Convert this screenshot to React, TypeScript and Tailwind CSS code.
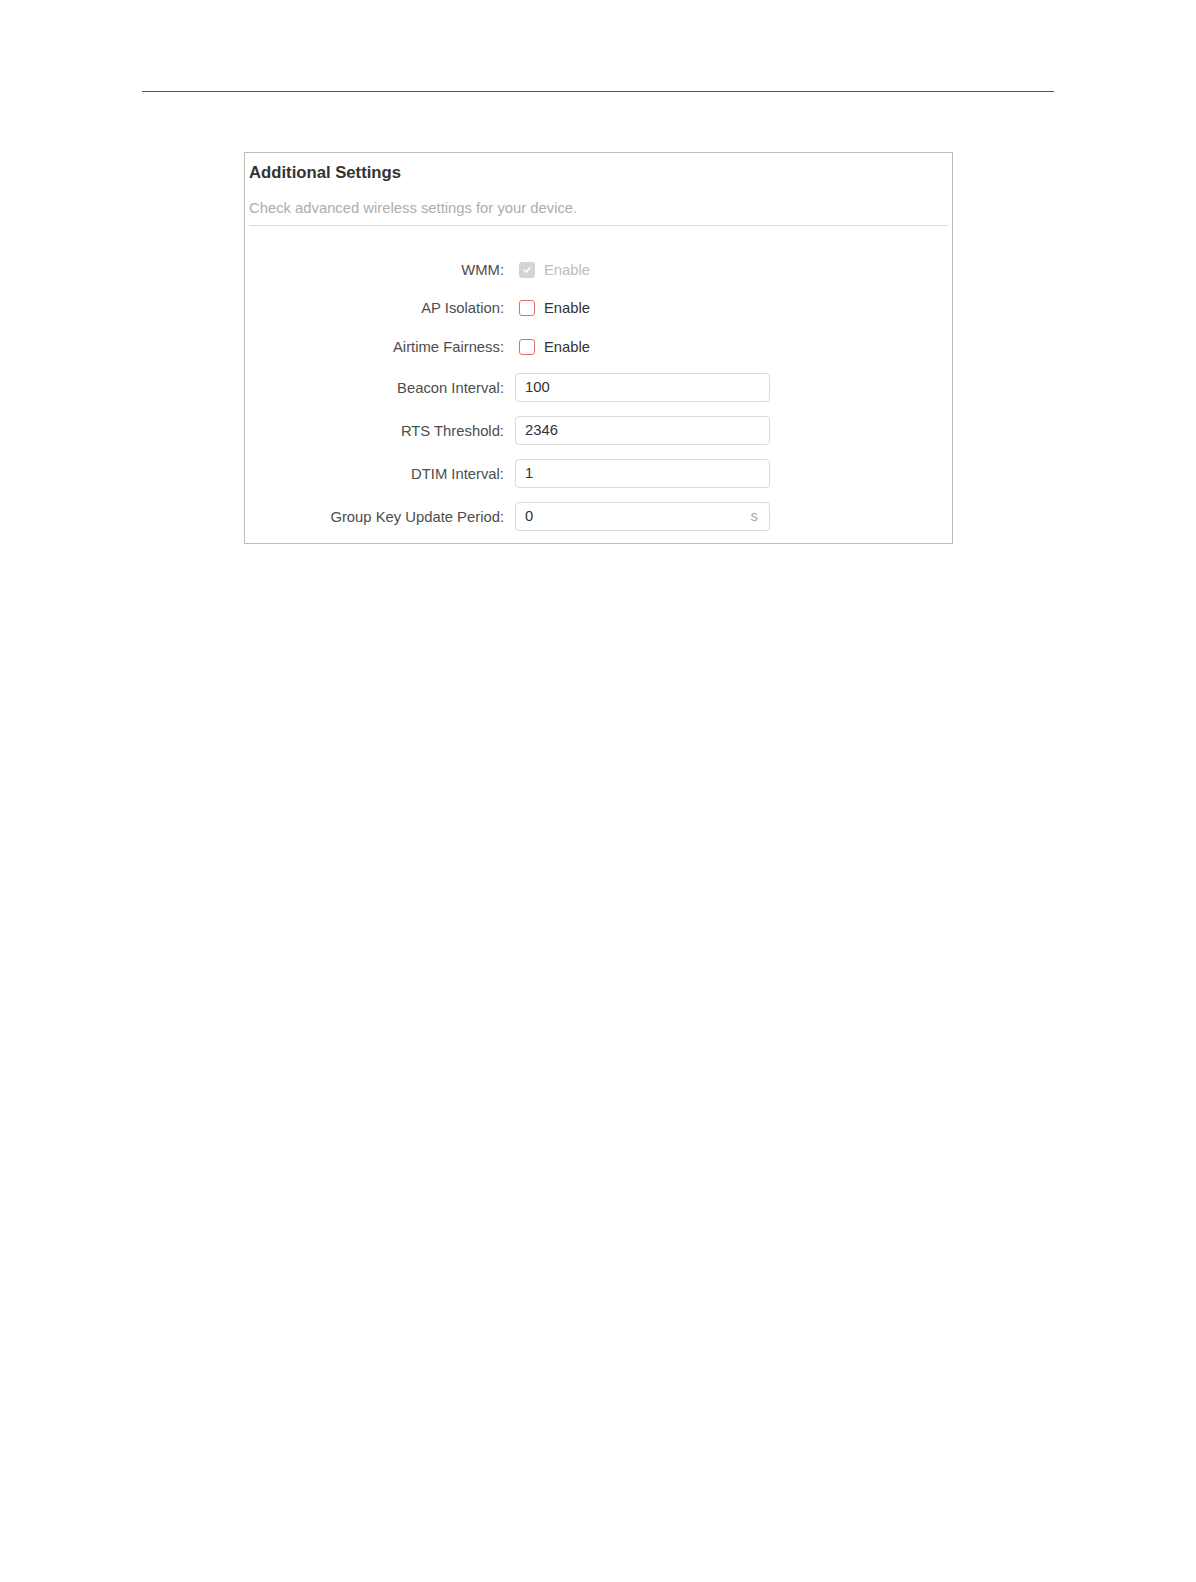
import type { ReactNode } from 'react'

type Field = {
  label: string
  value: string
  unit?: string
}

const fields: Field[] = [
  { label: 'Beacon Interval:', value: '100' },
  { label: 'RTS Threshold:', value: '2346' },
  { label: 'DTIM Interval:', value: '1' },
  { label: 'Group Key Update Period:', value: '0', unit: 's' },
]

function Row({ label, className, children }: { label: string; className: string; children: ReactNode }) {
  return (
    <div className={`flex items-center ${className}`}>
      <div className="w-[259px] shrink-0 text-right text-[14.8px] leading-[18px] text-[#4d4d4d]">{label}</div>
      <div className="ml-[11px] flex items-center">{children}</div>
    </div>
  )
}

function CheckRow({ label, disabled, className }: { label: string; disabled?: boolean; className: string }) {
  return (
    <Row label={label} className={className}>
      {disabled ? (
        <span className="ml-[4px] flex h-4 w-4 items-center justify-center rounded-[3px] bg-[#d4d4d4]">
          <svg viewBox="0 0 12 12" className="h-[10px] w-[10px]" fill="none" stroke="#fff" strokeWidth="2" strokeLinecap="round" strokeLinejoin="round">
            <path d="M2.5 6.2 5 8.5 9.5 3.5" />
          </svg>
        </span>
      ) : (
        <span className="ml-[4px] h-4 w-4 rounded-[3px] border border-[#e36b6b] bg-white" />
      )}
      <span className={`ml-[9px] text-[14.8px] leading-[18px] ${disabled ? 'text-[#bdbdbd]' : 'text-[#333]'}`}>Enable</span>
    </Row>
  )
}

export default function App() {
  return (
    <div className="min-h-[1582px] bg-white font-['Liberation_Sans',Arial,sans-serif]">
      <div className="px-[142px] pt-[91px]">
        <div className="h-px bg-[#555]" />
      </div>

      <div className="ml-[244px] mt-[60px] w-[709px] border border-[#bdbdbd] bg-white pb-[5px]">
        <div className="px-[4px] pt-[10px]">
          <h2 className="text-[16.7px] font-bold leading-[20px] text-[#333]">Additional Settings</h2>
          <p className="mt-[17px] text-[14.8px] leading-[17px] text-[#adadad]">
            Check advanced wireless settings for your device.
          </p>
          <div className="mt-[8px] h-px bg-[#dcdcdc]" />
        </div>

        <div className="mt-[25px] flex flex-col">
          <CheckRow label="WMM:" disabled className="h-[38px]" />
          <CheckRow label="AP Isolation:" className="h-[38px]" />
          <CheckRow label="Airtime Fairness:" className="h-[39px]" />
          {fields.map((f) => (
            <Row key={f.label} label={f.label} className="h-[43px]">
              <div className="flex h-[29px] w-[255px] items-center justify-between rounded-[4px] border border-[#d9d9d9] bg-white pl-[9px] pr-[11px] text-[14.8px] text-[#333]">
                <span>{f.value}</span>
                {f.unit && <span className="text-[#aaa]">{f.unit}</span>}
              </div>
            </Row>
          ))}
        </div>
      </div>
    </div>
  )
}
